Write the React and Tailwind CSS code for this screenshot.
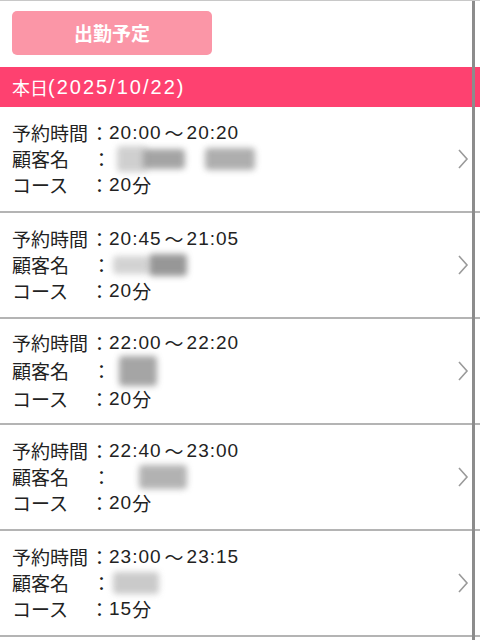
import React from "react";

const reservations = [
    {
        time: ["20:00", "20:20"],
        course: "20",
        blobs: [[6, 30, 26, "bg-[#c4c4c4]"], [-4, 42, 20, "bg-[#8e8e8e]"], [20, 50, 22, "bg-[#9a9a9a]"]],
    },
    { time: ["20:45", "21:05"], course: "20", blobs: [[2, 36, 18, "bg-[#c8c8c8]"], [0, 38, 22, "bg-[#7e7e7e]"]] },
    { time: ["22:00", "22:20"], course: "20", blobs: [[8, 38, 30, "bg-[#8f8f8f]"]] },
    { time: ["22:40", "23:00"], course: "20", blobs: [[28, 48, 24, "bg-[#a0a0a0]"]] },
    { time: ["23:00", "23:15"], course: "15", blobs: [[2, 46, 22, "bg-[#bdbdbd]"]] },
];

const latin = { fontFamily: '"Liberation Sans", Arial, sans-serif' };

function Chevron() {
    return (
        <svg width="14" height="24" viewBox="0 0 14 24" className="shrink-0">
            <path d="M3 3 L11 12 L3 21" fill="none" stroke="#9a9a9a" strokeWidth="1.6" />
        </svg>
    );
}

function Row({ item }) {
    return (
        <div className="flex h-[106px] items-center border-b-2 border-[#b4b4b4] pl-3 pr-[10px]">
            <div className="flex-1 text-[19px] leading-[26px] text-[#222]">
                <div className="flex">
                    <span className="w-[78px]">予約時間</span>
                    <span>：</span>
                    <span className="tracking-[1px]" style={latin}>{item.time[0]}</span>
                    <span className="w-[25px] text-center">〜</span>
                    <span className="tracking-[1px]" style={latin}>{item.time[1]}</span>
                </div>
                <div className="flex items-center">
                    <span className="w-[78px]">顧客名</span>
                    <span className="pl-[2px]">：</span>
                    <span className="flex items-center">
                        {item.blobs.map(([ml, w, h, color], i) => (
                            <span
                                key={i}
                                className={`inline-block rounded-sm blur-[3px] opacity-80 ${color}`}
                                style={{ marginLeft: ml, width: w, height: h }}
                            />
                        ))}
                    </span>
                </div>
                <div className="flex">
                    <span className="w-[78px]">コース</span>
                    <span>：</span>
                    <span className="tracking-[1px]" style={latin}>{item.course}</span>
                    <span>分</span>
                </div>
            </div>
            <Chevron />
        </div>
    );
}

export default function App() {
    return (
        <div
            className="relative h-[640px] w-[480px] overflow-hidden border-t border-[#c8c8c8] bg-white"
            style={{ fontFamily: '"Noto Sans CJK JP", "Noto Sans", sans-serif' }}
        >
            <div className="px-3 pt-[10px] pb-3">
                <div className="flex h-[44px] w-[200px] items-center justify-center rounded-[5px] bg-[#fb96a7] text-[19px] font-bold text-white">
                    出勤予定
                </div>
            </div>
            <div className="flex h-[40px] items-center bg-[#fe4170] pl-3 text-[18px] text-white">
                <span>本日</span>
                <span className="text-[20px] tracking-[2px]" style={latin}>
                    (2025/10/22)
                </span>
            </div>
            {reservations.map((item, i) => (
                <Row key={i} item={item} />
            ))}
            <div className="absolute top-0 right-[5px] h-full w-[3px] bg-[#8c8c8c]" />
        </div>
    );
}
